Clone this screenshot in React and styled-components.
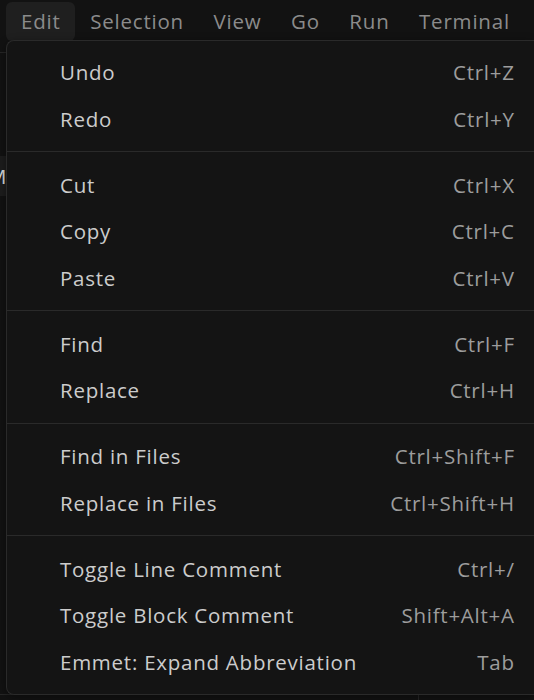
import React from 'react';
import styled, { createGlobalStyle } from 'styled-components';

const GlobalStyle = createGlobalStyle`
  html, body {
    margin: 0;
    padding: 0;
    background: #121212;
    overflow: hidden;
  }
  body {
    font-family: "Open Sans", "Noto Sans", sans-serif;
  }
`;

const Screen = styled.div`
  position: relative;
  width: 534px;
  height: 700px;
  overflow: hidden;
  background: #121212;
`;

/* ---------- title bar ---------- */

const TitleBar = styled.div`
  display: flex;
  align-items: center;
  height: 41px;
  padding: 0 0 0 6px;
`;

const MenuButton = styled.div`
  height: 39px;
  margin-top: 1px;
  padding: 0 14.5px 0 15px;
  display: flex;
  align-items: center;
  border-radius: 6px;
  font-size: 20.5px;
  letter-spacing: 0.8px;
  color: #8b8b8b;
  background: ${p => (p.$active ? '#1f1f1f' : 'transparent')};
  white-space: nowrap;
`;

/* ---------- workbench behind the menu ---------- */

const Workbench = styled.div`
  margin-top: 11px;
  height: 648px;
  border-top: 1px solid #262626;
  display: flex;
  flex-direction: column;
`;

const ExplorerRow = styled.div`
  margin-top: 103px;
  height: 40px;
  width: 40px;
  background: #1d1d1d;
  color: #d8d8d8;
  font-size: 20.5px;
  display: flex;
  align-items: center;
  text-indent: -12px;
`;

const Spacer = styled.div`
  flex: 1;
`;

const BottomStrip = styled.div`
  height: 6px;
  display: flex;
  border-top: 1px solid #262626;
`;

const Gutter = styled.div`
  margin-left: 418px;
  border-left: 1px solid #262626;
  flex: 1;
  color: #6e6e6e;
  font-size: 20px;
  line-height: 1;
  padding-left: 40px;
  padding-top: 3px;
`;

/* ---------- dropdown ---------- */

const Dropdown = styled.div`
  position: absolute;
  top: 40px;
  left: 6px;
  right: 0;
  background: #141414;
  border: 1px solid #2a2a2a;
  border-right: none;
  border-radius: 8px 0 0 8px;
  padding: 8px 0 9px;
  box-shadow: 0 2px 8px rgba(0, 0, 0, 0.4);
`;

const Item = styled.div`
  display: flex;
  align-items: center;
  justify-content: space-between;
  height: 46.5px;
  padding: 0 20px 0 53px;
  font-size: 20.5px;
  letter-spacing: 0.75px;
  white-space: nowrap;
`;

const Label = styled.span`
  color: #cccccc;
`;

const Keys = styled.span`
  color: #9d9d9d;
  margin-right: -0.75px;
`;

const Separator = styled.div`
  height: 1px;
  margin: 9px 0 9.5px;
  background: #2a2a2a;
`;

const groups = [
  [
    ['Undo', 'Ctrl+Z'],
    ['Redo', 'Ctrl+Y'],
  ],
  [
    ['Cut', 'Ctrl+X'],
    ['Copy', 'Ctrl+C'],
    ['Paste', 'Ctrl+V'],
  ],
  [
    ['Find', 'Ctrl+F'],
    ['Replace', 'Ctrl+H'],
  ],
  [
    ['Find in Files', 'Ctrl+Shift+F'],
    ['Replace in Files', 'Ctrl+Shift+H'],
  ],
  [
    ['Toggle Line Comment', 'Ctrl+/'],
    ['Toggle Block Comment', 'Shift+Alt+A'],
    ['Emmet: Expand Abbreviation', 'Tab'],
  ],
];

const menus = ['Edit', 'Selection', 'View', 'Go', 'Run', 'Terminal'];

export default function App() {
  return (
    <Screen>
      <GlobalStyle />
      <TitleBar>
        {menus.map((m, i) => (
          <MenuButton key={m} $active={i === 0}>
            {m}
          </MenuButton>
        ))}
      </TitleBar>

      <Workbench>
        <ExplorerRow>M</ExplorerRow>
        <Spacer />
        <BottomStrip>
          <Gutter>12</Gutter>
        </BottomStrip>
      </Workbench>

      <Dropdown>
        {groups.map((group, gi) => (
          <React.Fragment key={gi}>
            {gi > 0 && <Separator />}
            {group.map(([label, keys]) => (
              <Item key={label}>
                <Label>{label}</Label>
                <Keys>{keys}</Keys>
              </Item>
            ))}
          </React.Fragment>
        ))}
      </Dropdown>
    </Screen>
  );
}
